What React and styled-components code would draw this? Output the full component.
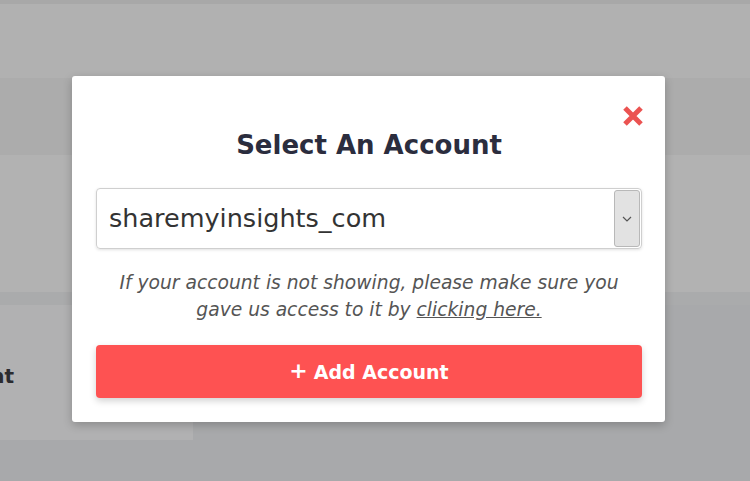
import React from "react";
import styled, { createGlobalStyle } from "styled-components";

const Global = createGlobalStyle`
  html, body { margin: 0; padding: 0; }
  body { width: 750px; height: 481px; overflow: hidden; background: #a8a9ab; font-family: "DejaVu Sans", sans-serif; }
  #root { width: 750px; height: 481px; }
`;

const Page = styled.div`
  position: relative;
  width: 750px;
  height: 481px;
  display: flex;
  flex-direction: column;
  background: #a8a9ab;
`;

const Band = styled.div`
  height: ${(p) => p.h}px;
  background: ${(p) => p.bg};
  flex: none;
`;

const CardRow = styled.div`
  height: 135px;
  display: flex;
  flex: none;
`;

const BgCard = styled.div`
  width: 193px;
  background: #b1b1b2;
  display: flex;
  align-items: center;
  overflow: hidden;
`;

const BgCardTitle = styled.span`
  font-family: "DejaVu Sans", sans-serif;
  font-weight: 700;
  font-size: 20px;
  color: #2b2b2f;
  white-space: nowrap;
  margin-left: -77px;
  margin-top: 6px;
`;

const Modal = styled.div`
  position: absolute;
  left: 72px;
  top: 76px;
  width: 593px;
  height: 346px;
  box-sizing: border-box;
  background: #ffffff;
  border-radius: 3px;
  box-shadow: 0 3px 10px rgba(0, 0, 0, 0.22);
  padding: 54px 23px 23px 24px;
  display: flex;
  flex-direction: column;
`;

const CloseButton = styled.button`
  position: absolute;
  top: 29px;
  right: 21px;
  width: 22px;
  height: 22px;
  padding: 0;
  border: 0;
  background: transparent;
  display: flex;
  cursor: pointer;
`;

const Title = styled.h2`
  margin: 0;
  font-family: "DejaVu Sans", sans-serif;
  font-weight: 700;
  font-size: 26px;
  line-height: 31px;
  color: #2b2d3e;
  text-align: center;
`;

const SelectBox = styled.div`
  margin-top: 27px;
  height: 61px;
  box-sizing: border-box;
  border: 1px solid #cfcfcf;
  border-radius: 4px;
  box-shadow: 0 1px 3px rgba(0, 0, 0, 0.12);
  display: flex;
  align-items: stretch;
  padding: 1px 1px 1px 12px;
`;

const SelectValue = styled.div`
  flex: 1;
  display: flex;
  align-items: center;
  font-family: "DejaVu Sans", sans-serif;
  font-size: 25.5px;
  color: #333333;
  padding-bottom: 2px;
`;

const ArrowBox = styled.div`
  width: 26px;
  box-sizing: border-box;
  background: #e2e2e2;
  border: 1px solid #b8b8b8;
  border-radius: 3px;
  display: flex;
  align-items: center;
  justify-content: center;
`;

const Helper = styled.p`
  margin: 20px 0 0;
  font-family: "DejaVu Sans", sans-serif;
  font-style: italic;
  font-weight: 300;
  font-size: 18.7px;
  line-height: 27px;
  color: #555555;
  text-align: center;
`;

const HelperLink = styled.a`
  color: inherit;
  text-decoration: underline;
`;

const AddButton = styled.button`
  margin-top: 22px;
  height: 53px;
  border: 0;
  border-radius: 4px;
  background: #fe5252;
  box-shadow: 0 3px 7px rgba(0, 0, 0, 0.18);
  color: #ffffff;
  font-family: "DejaVu Sans", sans-serif;
  font-weight: 700;
  font-size: 19px;
  display: flex;
  align-items: center;
  justify-content: center;
  gap: 6px;
  cursor: pointer;
`;

const Plus = styled.span`
  font-size: 22px;
  line-height: 1;
  margin-top: -2px;
`;

export default function App() {
  return (
    <>
      <Global />
      <Page>
        <Band h={4} bg="#a8a8a8" />
        <Band h={74} bg="#b1b1b1" />
        <Band h={77} bg="#acacac" />
        <Band h={137} bg="#b2b2b2" />
        <Band h={13} bg="#aaabac" />
        <CardRow>
          <BgCard>
            <BgCardTitle>Account</BgCardTitle>
          </BgCard>
        </CardRow>

        <Modal>
          <CloseButton aria-label="Close">
            <svg width="22" height="22" viewBox="0 0 22 22">
              <path d="M3 3 L19 19 M19 3 L3 19" stroke="#eb5351" strokeWidth="5" strokeLinecap="butt" />
            </svg>
          </CloseButton>
          <Title>Select An Account</Title>
          <SelectBox>
            <SelectValue>sharemyinsights_com</SelectValue>
            <ArrowBox>
              <svg width="10" height="6" viewBox="0 0 10 6">
                <path d="M1 1 L5 5 L9 1" fill="none" stroke="#555" strokeWidth="1.2" />
              </svg>
            </ArrowBox>
          </SelectBox>
          <Helper>
            If your account is not showing, please make sure you
            <br />
            gave us access to it by <HelperLink href="#">clicking here.</HelperLink>
          </Helper>
          <AddButton>
            <Plus>+</Plus>
            <span>Add Account</span>
          </AddButton>
        </Modal>
      </Page>
    </>
  );
}
